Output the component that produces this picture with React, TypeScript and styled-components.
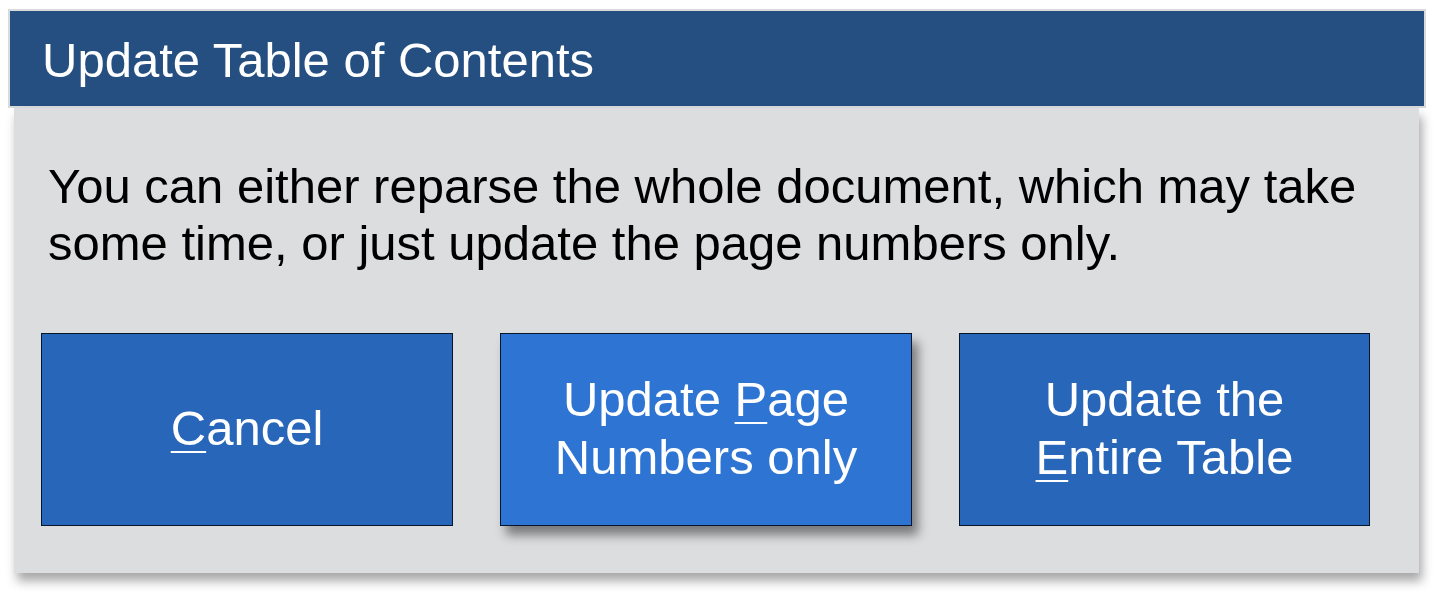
import React from 'react';
import styled, { createGlobalStyle } from 'styled-components';

const GlobalStyle = createGlobalStyle`
  body {
    margin: 0;
    background: #ffffff;
    font-family: "Liberation Sans", Arial, sans-serif;
  }
`;

const Dialog = styled.div`
  width: 1418px;
  margin: 9px 0 0 8px;
  padding-bottom: 20px;
`;

const TitleBar = styled.div`
  display: flex;
  align-items: center;
  padding: 3px 0 0 32px;
  box-sizing: border-box;
  height: 99px;
  border: 2px solid #d9dadb;
  background: #254f81;
  color: #ffffff;
  font-size: 49px;
`;

const Body = styled.div`
  height: 465px;
  margin: 0 7px 0 6px;
  padding: 50px 0 0 34px;
  box-sizing: border-box;
  background: #dcdddf;
  box-shadow: 3px 8px 10px rgba(0, 0, 0, 0.35);
`;

const Message = styled.p`
  margin: 0;
  font-size: 49px;
  line-height: 57px;
  color: #000000;
`;

const ButtonRow = styled.div`
  display: flex;
  gap: 47px;
  margin: 61px 0 0 -7px;
`;

const DialogButton = styled.button<{ focused?: boolean }>`
  width: 412px;
  height: 193px;
  padding: 0 0 4px;
  border: 1px solid #08142a;
  background: ${({ focused }) => (focused ? '#2e74d2' : '#2866b9')};
  box-shadow: ${({ focused }) => (focused ? '6px 9px 10px rgba(0, 0, 0, 0.45)' : 'none')};
  color: #ffffff;
  font-family: "Liberation Sans", Arial, sans-serif;
  font-size: 49px;
  line-height: 58px;
  text-align: center;

  &:last-child {
    width: 411px;
  }
`;

const Key = styled.span`
  text-decoration: underline;
  text-decoration-thickness: 2px;
  text-underline-offset: 6px;
`;

const App = () => (
    <>
        <GlobalStyle/>
        <Dialog>
            <TitleBar>Update Table of Contents</TitleBar>
            <Body>
                <Message>
                    You can either reparse the whole document, which may take<br/>
                    some time, or just update the page numbers only.
                </Message>
                <ButtonRow>
                    <DialogButton><Key>C</Key>ancel</DialogButton>
                    <DialogButton focused>Update <Key>P</Key>age<br/>Numbers only</DialogButton>
                    <DialogButton>Update the<br/><Key>E</Key>ntire Table</DialogButton>
                </ButtonRow>
            </Body>
        </Dialog>
    </>
);

export default App;
